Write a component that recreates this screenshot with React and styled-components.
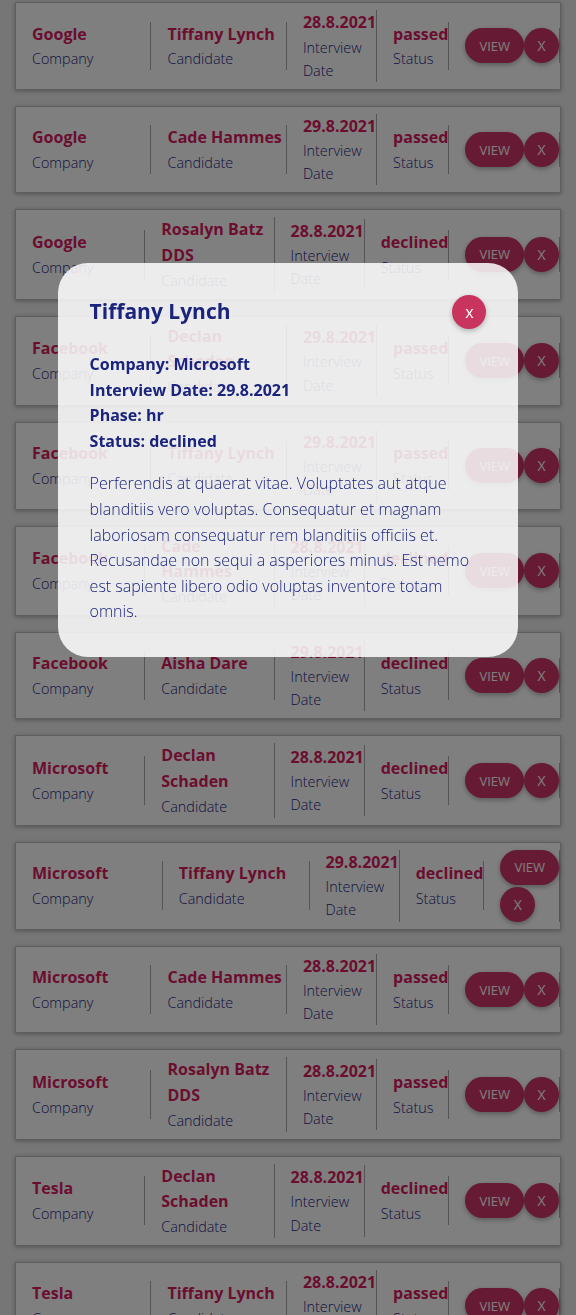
import React from "react";
import styled, { createGlobalStyle } from "styled-components";

const GlobalStyle = createGlobalStyle`
  body {
    margin: 0;
    background: #ececec;
    font-family: "Open Sans", "Liberation Sans", sans-serif;
  }
`;

const crimson = "#d81b60";
const navy = "#1a237e";
const pink = "#cf3466";

const List = styled.div`
  padding: 2px 15px 0;
`;

const Card = styled.div`
  display: flex;
  align-items: center;
  background: #fff;
  border: 1px solid #bdbdbd;
  box-shadow: 0 1px 4px rgba(0, 0, 0, 0.3);
  padding: 7px 0 7px 16px;
  margin-bottom: 16px;
`;

const Field = styled.div`
  padding-left: ${({ $first }) => ($first ? "0" : "16px")};
  border-right: 1px solid #aaa;
  ${({ $grow }) =>
    $grow ? "flex: 1 1 0;" : "flex: none; width: min-content;"}
`;

const Value = styled.h4`
  margin: 0;
  font-size: 16px;
  font-weight: 700;
  line-height: 1.6;
  color: ${crimson};
`;

const Label = styled.p`
  margin: 0;
  font-size: 14.4px;
  font-weight: 300;
  line-height: 1.6;
  color: ${navy};
`;

const Actions = styled.div`
  display: flex;
  flex: none;
  flex-wrap: ${({ $stacked }) => ($stacked ? "wrap" : "nowrap")};
  width: ${({ $stacked }) => ($stacked ? "min-content" : "auto")};
  row-gap: 2px;
  padding-left: 16px;
  border-right: 1px solid #aaa;
`;

const Button = styled.button`
  height: 35px;
  min-width: 35px;
  padding: ${({ $round }) => ($round ? "0" : "0 14px")};
  border: none;
  border-radius: 18px;
  background: ${pink};
  color: #fff;
  font-family: inherit;
  font-size: ${({ $round }) => ($round ? "14px" : "13px")};
  box-shadow: 0 2px 5px rgba(0, 0, 0, 0.3);
  cursor: pointer;
`;

const Backdrop = styled.div`
  position: fixed;
  inset: 0;
  background: rgba(0, 0, 0, 0.5);
  z-index: 10;
`;

const Modal = styled.div`
  position: fixed;
  top: 20%;
  left: 10%;
  width: 80%;
  box-sizing: border-box;
  padding: 32px;
  border-radius: 30px;
  background: rgba(255, 255, 255, 0.85);
  color: ${navy};
  z-index: 11;
`;

const ModalHeader = styled.div`
  display: flex;
  justify-content: space-between;
  align-items: center;
  margin-bottom: 23px;
`;

const Title = styled.h2`
  margin: 0;
  font-size: 21px;
  font-weight: 700;
  line-height: 1.6;
`;

const Close = styled.button`
  width: 34px;
  height: 34px;
  border: none;
  border-radius: 50%;
  background: #c9345f;
  color: #fff;
  font-family: inherit;
  font-size: 16px;
  box-shadow: 0 2px 5px rgba(0, 0, 0, 0.25);
  cursor: pointer;
`;

const Detail = styled.div`
  font-size: 16px;
  font-weight: 700;
  line-height: 1.6;
`;

const Description = styled.p`
  margin: 17px 0 0;
  font-size: 16px;
  font-weight: 300;
  line-height: 1.6;
`;

const interviews = [
  ["Google", "Tiffany Lynch", "28.8.2021", "passed"],
  ["Google", "Cade Hammes", "29.8.2021", "passed"],
  ["Google", "Rosalyn Batz DDS", "28.8.2021", "declined"],
  ["Facebook", "Declan Schaden", "29.8.2021", "passed"],
  ["Facebook", "Tiffany Lynch", "29.8.2021", "passed"],
  ["Facebook", "Cade Hammes", "28.8.2021", "declined"],
  ["Facebook", "Aisha Dare", "29.8.2021", "declined"],
  ["Microsoft", "Declan Schaden", "28.8.2021", "declined"],
  ["Microsoft", "Tiffany Lynch", "29.8.2021", "declined"],
  ["Microsoft", "Cade Hammes", "28.8.2021", "passed"],
  ["Microsoft", "Rosalyn Batz DDS", "28.8.2021", "passed"],
  ["Tesla", "Declan Schaden", "28.8.2021", "declined"],
  ["Tesla", "Tiffany Lynch", "28.8.2021", "passed"],
  ["Tesla", "Cade Hammes", "29.8.2021", "passed"],
];

// the row opened in the modal; its buttons sit stacked
const selected = 8;

const App = () => {
  const current = interviews[selected];

  return (
    <>
      <GlobalStyle />
      <List>
        {interviews.map(([company, candidate, date, status], i) => (
          <Card key={i}>
            <Field $first $grow>
              <Value>{company}</Value>
              <Label>Company</Label>
            </Field>
            <Field $grow>
              <Value>{candidate}</Value>
              <Label>Candidate</Label>
            </Field>
            <Field>
              <Value>{date}</Value>
              <Label>Interview Date</Label>
            </Field>
            <Field>
              <Value>{status}</Value>
              <Label>Status</Label>
            </Field>
            <Actions $stacked={i === selected}>
              <Button>VIEW</Button>
              <Button $round>X</Button>
            </Actions>
          </Card>
        ))}
      </List>
      <Backdrop />
      <Modal>
        <ModalHeader>
          <Title>{current[1]}</Title>
          <Close>x</Close>
        </ModalHeader>
        <Detail>Company: {current[0]}</Detail>
        <Detail>Interview Date: {current[2]}</Detail>
        <Detail>Phase: hr</Detail>
        <Detail>Status: {current[3]}</Detail>
        <Description>
          Perferendis at quaerat vitae. Voluptates aut atque blanditiis vero
          voluptas. Consequatur et magnam laboriosam consequatur rem blanditiis
          officiis et. Recusandae non sequi a asperiores minus. Est nemo est
          sapiente libero odio voluptas inventore totam omnis.
        </Description>
      </Modal>
    </>
  );
};

export default App;
